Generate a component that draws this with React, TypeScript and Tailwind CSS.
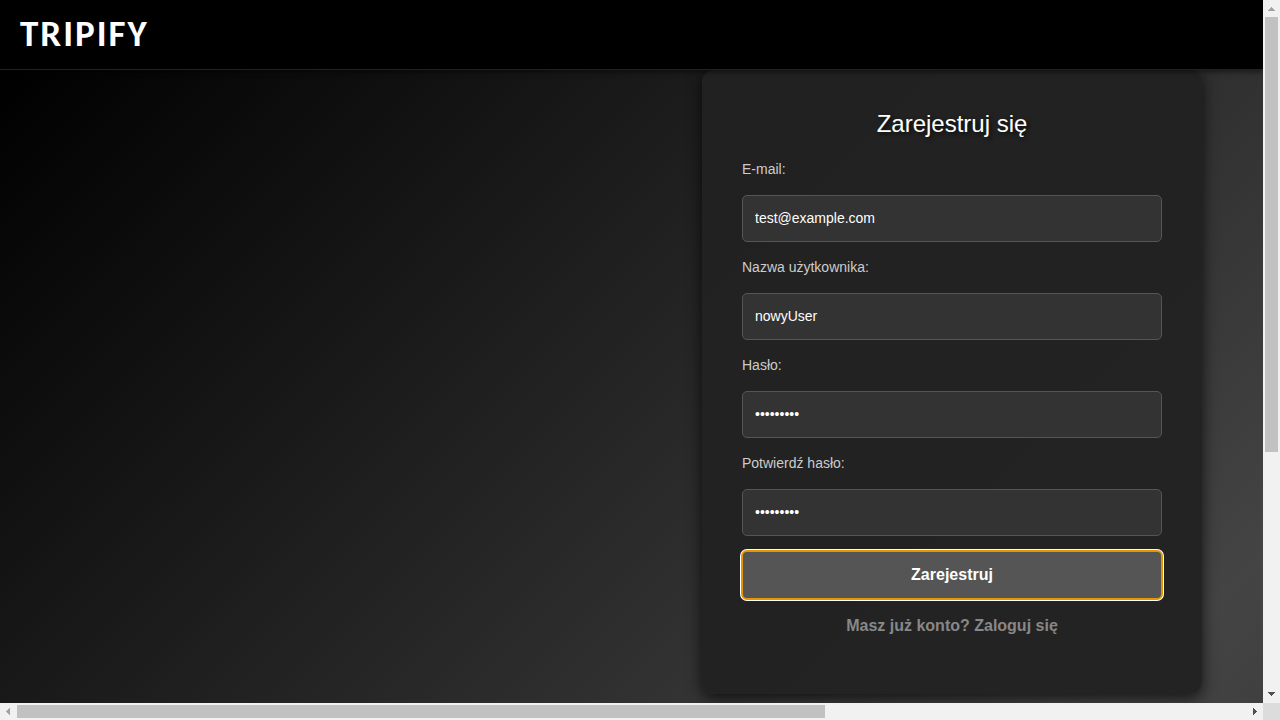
import type { InputHTMLAttributes } from "react";

const fields: (InputHTMLAttributes<HTMLInputElement> & { id: string; label: string })[] = [
  { id: "email", label: "E-mail:", type: "email", defaultValue: "test@example.com" },
  { id: "username", label: "Nazwa użytkownika:", type: "text", defaultValue: "nowyUser" },
  { id: "password", label: "Hasło:", type: "password", defaultValue: "password1" },
  { id: "confirm", label: "Potwierdź hasło:", type: "password", defaultValue: "password1" },
];

function VerticalScrollbar() {
  return (
    <div aria-hidden="true" className="flex w-[17px] shrink-0 flex-col items-center bg-[#f1f1f1]">
      <svg className="size-[17px] shrink-0" viewBox="0 0 17 17" shapeRendering="crispEdges">
        <path d="M8 7h1v1h1v1h1v1h1v1H5v-1h1V9h1V8h1z" fill="#a3a3a3" />
      </svg>
      <div className="flex min-h-0 grow flex-col">
        <div className="h-[65%] w-[13px] bg-[#c1c1c1]" />
      </div>
      <svg className="size-[17px] shrink-0" viewBox="0 0 17 17" shapeRendering="crispEdges">
        <path d="M5 6h7v1h-1v1h-1v1H9v1H8V9H7V8H6V7H5z" fill="#505050" />
      </svg>
    </div>
  );
}

function HorizontalScrollbar() {
  return (
    <div aria-hidden="true" className="flex h-[17px] shrink-0 items-center bg-[#f1f1f1]">
      <svg className="size-[17px] shrink-0" viewBox="0 0 17 17" shapeRendering="crispEdges">
        <path d="M10 5v7H9v-1H8v-1H7V9H6V8h1V7h1V6h1V5z" fill="#a3a3a3" />
      </svg>
      <div className="min-w-0 grow">
        <div className="h-[13px] w-[65.75%] bg-[#c1c1c1]" />
      </div>
      <svg className="size-[17px] shrink-0" viewBox="0 0 17 17" shapeRendering="crispEdges">
        <path d="M7 5v7h1v-1h1v-1h1V9h1V8h-1V7H9V6H8V5z" fill="#505050" />
      </svg>
      <div className="size-[17px] shrink-0 bg-[#dcdcdc]" />
    </div>
  );
}

export default function App() {
  return (
    <div className="flex h-screen flex-col overflow-hidden font-['Liberation_Sans',Arial,sans-serif]">
      <div className="flex min-h-0 grow">
        <div className="flex min-w-0 grow flex-col overflow-hidden">
          <header className="z-10 flex h-[70px] shrink-0 items-center border-b border-[#222] bg-black px-5 pb-0.5 shadow-[0_2px_5px_rgba(0,0,0,0.5)]">
            <a
              href="#"
              className="font-[Carlito,Lato,sans-serif] text-[37px] leading-10 font-bold tracking-[2px] text-white"
            >
              TRIPIFY
            </a>
          </header>
          <main className="flex grow items-start justify-end bg-[linear-gradient(135deg,#000,#444_1237px,#222_2060px)] pr-[61px]">
            <form
              className="flex w-[500px] flex-col rounded-xl bg-[#222]/95 px-10 pt-9 pb-14 shadow-[0_4px_15px_rgba(0,0,0,0.7)]"
              onSubmit={(e) => e.preventDefault()}
            >
              <h1 className="text-center text-2xl leading-9 text-white [text-shadow:2px_2px_4px_rgba(0,0,0,0.7)]">
                Zarejestruj się
              </h1>
              <div className="mt-4 flex flex-col gap-[14px]">
                {fields.map(({ id, label, ...input }) => (
                  <div key={id} className="flex flex-col gap-[15px]">
                    <label htmlFor={id} className="text-sm leading-[22px] text-[#ccc]">
                      {label}
                    </label>
                    <input
                      id={id}
                      {...input}
                      className="h-[47px] w-full rounded-[5px] border border-[#555] bg-[#333] px-3 pb-0.5 text-sm text-white"
                    />
                  </div>
                ))}
              </div>
              <button
                type="submit"
                className="mt-[15px] h-12 rounded-[5px] bg-[#555] text-base font-bold text-white ring-2 ring-white outline-2 outline-offset-[-1px] outline-[#e59700]"
              >
                Zarejestruj
              </button>
              <a href="#" className="mt-[15px] text-center text-base leading-6 font-bold text-[#888]">
                Masz już konto? Zaloguj się
              </a>
            </form>
          </main>
        </div>
        <VerticalScrollbar />
      </div>
      <HorizontalScrollbar />
    </div>
  );
}
